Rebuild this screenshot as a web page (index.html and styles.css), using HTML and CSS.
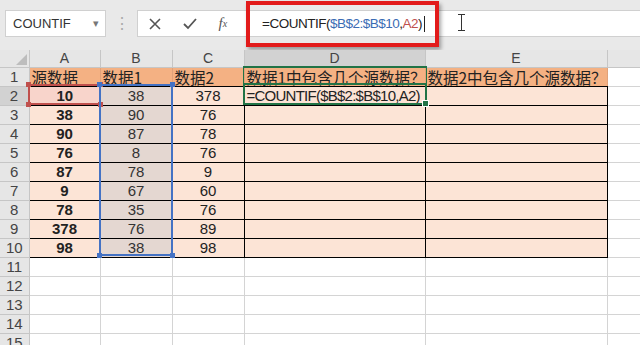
FILE: index.html
```html
<!DOCTYPE html>
<html lang="zh-CN">
<head>
    <meta charset="UTF-8">
    <title>COUNTIF</title>
    <link rel="stylesheet" href="styles.css">
</head>
<body>
    <div class="formula-bar">
        <div class="name-box">
            <span>COUNTIF</span>
            <span class="drop">&#9662;</span>
        </div>
        <div class="grip">&#8942;</div>
        <div class="input-area">
            <div class="fx-buttons">
                <span class="btn">
                    <svg width="12" height="12" viewBox="0 0 12 12"><path d="M1 1 L11 11 M11 1 L1 11" stroke="#555" stroke-width="1.6"/></svg>
                </span>
                <span class="btn">
                    <svg width="14" height="12" viewBox="0 0 14 12"><path d="M1 6 L5 10 L13 1" stroke="#555" stroke-width="1.8" fill="none"/></svg>
                </span>
                <span class="btn fx"><i>f</i><sub>x</sub></span>
            </div>
            <div class="formula-text">=COUNTIF(<span class="ref-blue">$B$2:$B$10</span>,<span class="ref-red">A2</span>)<span class="caret"></span></div>
            <div class="ibeam"></div>
        </div>
        <div class="callout"></div>
    </div>

    <div class="sheet">
        <table class="grid">
            <colgroup>
                <col class="c-rh"><col class="c-a"><col class="c-b"><col class="c-c"><col class="c-d"><col class="c-e"><col class="c-f">
            </colgroup>
            <tr class="col-head">
                <th class="corner"><span class="tri"></span></th>
                <th>A</th><th>B</th><th>C</th><th class="sel">D</th><th>E</th><th></th>
            </tr>
            <tr class="r1">
                <th>1</th>
                <td class="t">源数据</td><td class="t">数据1</td><td class="t">数据2</td>
                <td class="t d1">数据1中包含几个源数据？</td><td class="t">数据2中包含几个源数据？</td><td class="blank"></td>
            </tr>
            <tr>
                <th class="sel">2</th>
                <td class="a hl-a">10</td><td class="b">38</td><td class="c">378</td>
                <td class="d formula">=COUNTIF($B$2:$B$10,A2)</td><td class="e"></td><td class="blank"></td>
            </tr>
            <tr><th>3</th><td class="a">38</td><td class="b">90</td><td class="c">76</td><td class="d"></td><td class="e"></td><td class="blank"></td></tr>
            <tr><th>4</th><td class="a">90</td><td class="b">87</td><td class="c">78</td><td class="d"></td><td class="e"></td><td class="blank"></td></tr>
            <tr><th>5</th><td class="a">76</td><td class="b">8</td><td class="c">76</td><td class="d"></td><td class="e"></td><td class="blank"></td></tr>
            <tr><th>6</th><td class="a">87</td><td class="b">78</td><td class="c">9</td><td class="d"></td><td class="e"></td><td class="blank"></td></tr>
            <tr><th>7</th><td class="a">9</td><td class="b">67</td><td class="c">60</td><td class="d"></td><td class="e"></td><td class="blank"></td></tr>
            <tr><th>8</th><td class="a">78</td><td class="b">35</td><td class="c">76</td><td class="d"></td><td class="e"></td><td class="blank"></td></tr>
            <tr><th>9</th><td class="a">378</td><td class="b">76</td><td class="c">89</td><td class="d"></td><td class="e"></td><td class="blank"></td></tr>
            <tr><th>10</th><td class="a">98</td><td class="b">38</td><td class="c">98</td><td class="d"></td><td class="e"></td><td class="blank"></td></tr>
            <tr class="empty"><th>11</th><td></td><td></td><td></td><td></td><td></td><td></td></tr>
            <tr class="empty"><th>12</th><td></td><td></td><td></td><td></td><td></td><td></td></tr>
            <tr class="empty"><th>13</th><td></td><td></td><td></td><td></td><td></td><td></td></tr>
            <tr class="empty"><th>14</th><td></td><td></td><td></td><td></td><td></td><td></td></tr>
            <tr class="empty"><th>15</th><td></td><td></td><td></td><td></td><td></td><td></td></tr>
        </table>

        <!-- range highlights drawn over the cells -->
        <div class="range range-a">
            <span class="h tl"></span><span class="h tr"></span><span class="h bl"></span><span class="h br"></span>
        </div>
        <div class="range range-b">
            <span class="h tl"></span><span class="h tr"></span><span class="h bl"></span><span class="h br"></span>
        </div>
        <div class="active-d1"></div>
        <div class="active-d2"><span class="fill-handle"></span></div>
    </div>
</body>
</html>
```

FILE: styles.css
```css
:root {
    --head-bg: #e6e6e6;
    --head-line: #c6c6c6;
    --title-fill: #f4b183;
    --cell-fill: #fce4d6;
    --grid-line: #d4d4d4;
    --green: #217346;
    --blue: #4472c4;
    --red: #c0504d;
}

body {
    margin: 0;
    width: 640px;
    height: 345px;
    overflow: hidden;
    background: #fff;
    font-family: "Liberation Sans", "Noto Sans CJK SC", sans-serif;
}

/* ---- formula bar ---- */
.formula-bar {
    position: relative;
    height: 50px;
    background: #e9e9e9;
    display: flex;
    align-items: flex-start;
    padding-top: 10px;
    box-sizing: border-box;
}

.name-box {
    margin-left: 5px;
    width: 101px;
    height: 27px;
    box-sizing: border-box;
    background: #fff;
    border: 1px solid #d0d0d0;
    display: flex;
    align-items: center;
    justify-content: space-between;
    padding: 0 6px 0 7px;
    font-size: 13px;
    color: #333;
}

.name-box .drop {
    font-size: 11px;
    color: #777;
}

.grip {
    width: 31px;
    text-align: center;
    color: #aaa;
    font-size: 16px;
    line-height: 27px;
}

.input-area {
    position: relative;
    flex: 1;
    height: 27px;
    background: #fff;
    border: 1px solid #d0d0d0;
    border-right: none;
    box-sizing: border-box;
    display: flex;
    align-items: center;
}

.fx-buttons {
    width: 100px;
    display: flex;
    align-items: center;
    justify-content: space-around;
}

.btn {
    display: flex;
    align-items: center;
    color: #555;
}

.fx {
    font-family: "Liberation Serif", serif;
    font-size: 15px;
}

.fx sub {
    font-size: 10px;
    font-style: italic;
}

.formula-text {
    margin-left: 24px;
    font-size: 13.5px;
    letter-spacing: -0.5px;
    color: #222;
    display: flex;
    align-items: center;
    white-space: nowrap;
}

.ref-blue { color: #3a6cb4; }
.ref-red { color: #c0504d; }

.caret {
    display: inline-block;
    width: 1px;
    height: 16px;
    background: #222;
    margin-left: 2px;
}

.ibeam {
    position: absolute;
    left: 320px;
    top: 3px;
    width: 7px;
    height: 17px;
    border-top: 1px solid #333;
    border-bottom: 1px solid #333;
    box-sizing: border-box;
    background: linear-gradient(#333, #333) center / 1px 100% no-repeat;
}

.callout {
    position: absolute;
    left: 246px;
    top: 1px;
    width: 193px;
    height: 46px;
    box-sizing: border-box;
    border: 4px solid #e21b1b;
    box-shadow: 2px 3px 4px rgba(0, 0, 0, 0.35);
}

/* ---- sheet ---- */
.sheet {
    position: relative;
}

.grid {
    border-collapse: collapse;
    table-layout: fixed;
    width: 640px;
    font-size: 15px;
}

.c-rh { width: 29px; }
.c-a { width: 71px; }
.c-b { width: 72px; }
.c-c { width: 72px; }
.c-d { width: 181px; }
.c-e { width: 182px; }
.c-f { width: 33px; }

.grid th,
.grid td {
    padding: 0;
    border: 1px solid var(--grid-line);
    height: 18px;
    overflow: hidden;
    white-space: nowrap;
    line-height: 18px;
}

.grid th {
    background: var(--head-bg);
    border-color: var(--head-line);
    font-weight: normal;
    color: #444;
    text-align: center;
}

.col-head th {
    height: 16px;
    line-height: 16px;
    font-size: 14px;
    border-top: none;
}

.col-head th.sel {
    background: #d2d2d2;
    border-bottom: 2px solid var(--green);
}

.grid tr > th:first-child {
    border-left: none;
    font-size: 15px;
}

.grid tr > th.sel:first-child {
    background: #d2d2d2;
    border-right: 2px solid var(--green);
}

.corner {
    position: relative;
}

.corner .tri {
    position: absolute;
    right: 2px;
    bottom: 2px;
    width: 0;
    height: 0;
    border-left: 11px solid transparent;
    border-bottom: 11px solid #bdbdbd;
}

.r1 th,
.r1 td {
    height: 17px;
}

.r1 .t {
    background: var(--title-fill);
    font-family: "Noto Sans CJK SC", sans-serif;
    font-size: 15.5px;
    color: #222;
    padding-left: 2px;
    border-color: #e0a27a;
    border-bottom: 1px solid #000;
}

.grid td.a,
.grid td.b,
.grid td.c,
.grid td.d,
.grid td.e {
    background: var(--cell-fill);
    border: 1px solid #000;
    text-align: center;
    color: #222;
}

.grid td.a {
    font-weight: bold;
}

.grid td.hl-a {
    background: #f8d4cb;
}

.grid td.b {
    background: #e4d7d1;
    color: #333;
}

.grid td.formula {
    text-align: left;
    padding-left: 2px;
    font-size: 15px;
    letter-spacing: -0.75px;
    overflow: visible;
}

.grid td.blank {
    background: #fff;
}

.empty td {
    background: #fff;
}

/* ---- highlight overlays ---- */
.range {
    position: absolute;
    box-sizing: border-box;
    border: 2px solid;
}

.range-a {
    left: 28px;
    top: 34px;
    width: 73px;
    height: 21px;
    border-color: var(--red);
}

.range-a .h { background: var(--red); }

.range-b {
    left: 99px;
    top: 34px;
    width: 74px;
    height: 172px;
    border-color: var(--blue);
}

.range-b .h { background: var(--blue); }

.h {
    position: absolute;
    width: 5px;
    height: 5px;
}

.tl { left: -4px; top: -4px; }
.tr { right: -4px; top: -4px; }
.bl { left: -4px; bottom: -4px; }
.br { right: -4px; bottom: -4px; }

.active-d1 {
    position: absolute;
    left: 243px;
    top: 16px;
    width: 184px;
    height: 19px;
    box-sizing: border-box;
    border: 1px solid var(--green);
    border-bottom: none;
}

.active-d2 {
    position: absolute;
    left: 243px;
    top: 33px;
    width: 184px;
    height: 22px;
    box-sizing: border-box;
    border: 2px solid var(--green);
}

.fill-handle {
    position: absolute;
    right: -4px;
    bottom: -4px;
    width: 5px;
    height: 5px;
    background: var(--green);
    border: 1px solid #fff;
}
```
